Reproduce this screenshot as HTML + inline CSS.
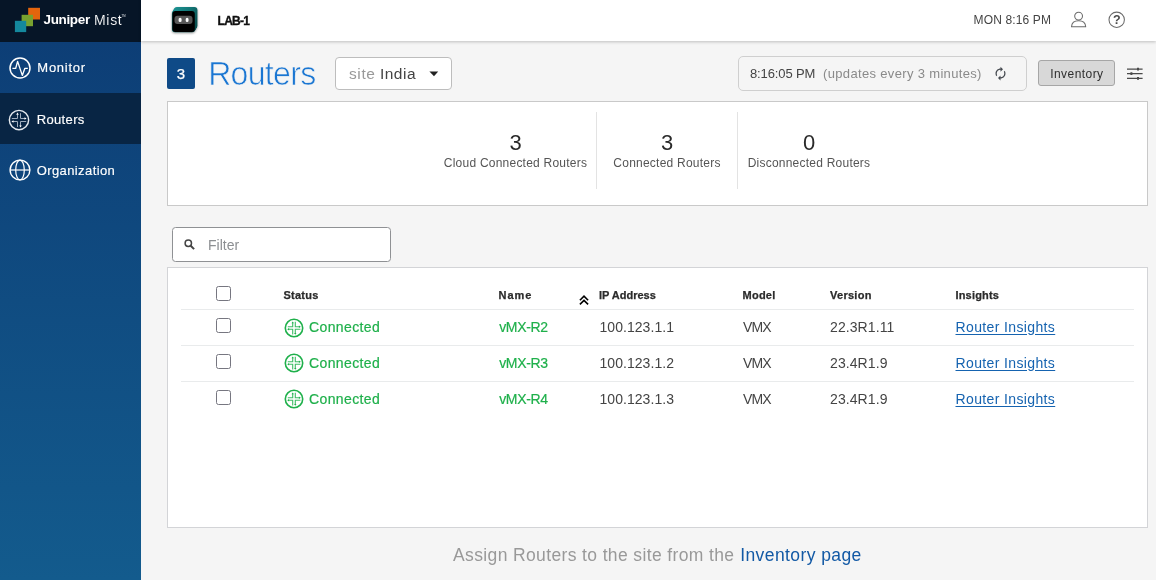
<!DOCTYPE html>
<html lang="en">
<head>
<meta charset="utf-8">
<title>Routers - Juniper Mist</title>
<style>
*{box-sizing:border-box;margin:0;padding:0}
html,body{width:1156px;height:580px;overflow:hidden}
body{position:relative;background:#f5f5f5;font-family:"Liberation Sans",sans-serif;color:#444;font-size:14px}
.abs{position:absolute;white-space:nowrap;line-height:1}
/* sidebar */
#side{position:absolute;left:0;top:0;width:141px;height:580px;background:linear-gradient(#0d3e76 0,#0d3e76 42px,#135b8d 580px)}
#logo{position:absolute;left:0;top:0;width:141px;height:42px;background:#061527}
.nav{position:absolute;left:0;width:141px;height:51px}
.nav.sel{background:#082544}
.nav span{position:absolute;-webkit-text-stroke:.15px #fff;color:#fff;font-size:13px;line-height:16px;letter-spacing:.75px;white-space:nowrap}
.nav svg{position:absolute}
/* header */
#hdr{position:absolute;left:141px;top:0;width:1015px;height:41px;background:#fff;box-shadow:0 1px 3px rgba(0,0,0,.22)}
/* panels */
.panel{position:absolute;background:#fff;border:1px solid #c9c9c9}
.hline{position:absolute;height:1px;background:#e9ebec;left:181px;width:953px}
.th{font-weight:bold;font-size:11px;color:#2b2b2b;-webkit-text-stroke:.25px #2b2b2b}
.td{font-size:14px;color:#444}
.g{color:#1fb04b;-webkit-text-stroke:.2px #1fb04b}
.lnk{color:#1563b0;text-decoration:underline;text-underline-offset:2px}
.cb{position:absolute;left:216px;width:15px;height:15px;border:1px solid #767680;border-radius:2.500px;background:#fff}
</style>
</head>
<body>
<div id="root" style="position:absolute;left:0;top:0;width:1156px;height:580px;will-change:transform">

<!-- ================= SIDEBAR ================= -->
<div id="side">
  <div id="logo">
    <svg class="abs" style="left:0;top:0" width="141" height="42" viewBox="0 0 141 42">
      <rect x="28.2" y="7.8" width="11.8" height="11.7" fill="#e4650d"/>
      <rect x="21.6" y="14.8" width="11.4" height="11.4" fill="#78a22f"/>
      <rect x="14.9" y="20.8" width="11.3" height="11.3" fill="#14889d"/>
    </svg>
    <span class="abs" id="lg1" style="left:43.5px;top:13.200px;font-size:13.5px;font-weight:bold;color:#fff;letter-spacing:-.35px">Juniper</span>
    <span class="abs" id="lg2" style="left:94px;top:12.800px;font-size:14px;color:#fff;letter-spacing:.7px;-webkit-text-stroke:.12px #061527">Mist</span>
    <span class="abs" id="lg3" style="left:121.600px;top:15.300px;font-size:2.800px;color:#dfe3e8">TM</span>
  </div>
  <div class="nav" style="top:42px">
    <svg style="left:8.900px;top:14.900px" width="22" height="22" viewBox="0 0 22 22" fill="none" stroke="#fff" stroke-width="1.500" stroke-linejoin="round">
      <circle cx="11" cy="11" r="10"/>
      <path d="M3.400 11.400h3.300l1.900-7 4.700 14 2.500-7h3" stroke-width="1.350"/>
    </svg>
    <span id="n1" style="left:37.300px;top:18px;letter-spacing:.75px">Monitor</span>
  </div>
  <div class="nav sel" style="top:93px"></div>
  <div class="nav" style="top:93px">
    <svg style="left:8.300px;top:15.500px" width="22" height="22" viewBox="0 0 22 22" fill="none" stroke="#e4e9ee" stroke-width="1.450">
      <circle cx="11" cy="11" r="9.650"/>
      <g stroke="#9fadbd" stroke-width="1">
        <path d="M3.800 9.500H9.500V5.200M12.500 4.200V9.500H17.200M5 12.500H9.500V18M18.200 12.500H12.500V17"/>
      </g>
      <g fill="#fff" stroke="none">
        <path d="M9.500 3.600l1.300 2.100H8.200zM18.600 9.500l-2.100 1.300V8.200zM3.400 12.500l2.100-1.300v2.600zM12.500 18.600l-1.300-2.100h2.600z"/>
      </g>
    </svg>
    <span id="n2" style="left:36.700px;top:19.400px;letter-spacing:.35px">Routers</span>
  </div>
  <div class="nav" style="top:144px">
    <svg style="left:8.700px;top:14.900px" width="22" height="22" viewBox="0 0 22 22" fill="none" stroke="#fff" stroke-width="1.400">
      <circle cx="11" cy="11" r="9.900"/>
      <path d="M1.200 11h19.600" stroke-width="1.200"/>
      <ellipse cx="11" cy="11" rx="4.300" ry="9.900" stroke-width="1.200"/>
    </svg>
    <span id="n3" style="left:36.700px;top:18.600px;letter-spacing:.4px">Organization</span>
  </div>
</div>

<!-- ================= HEADER ================= -->
<div id="hdr"></div>
<svg class="abs" style="left:171px;top:6px;filter:drop-shadow(0 1px 1.200px rgba(0,0,0,.4))" width="28" height="28" viewBox="0 0 28 28">
  <defs><linearGradient id="tg" x1="0" y1="0" x2="1" y2="0.600"><stop offset="0" stop-color="#1d9494"/><stop offset="0.550" stop-color="#127676"/><stop offset="1" stop-color="#0a5252"/></linearGradient></defs>
  <g fill="url(#tg)"><rect x="0.90" y="4.70" width="23.3" height="21.6" rx="3.300"/><rect x="1.27" y="4.07" width="23.3" height="21.6" rx="3.300"/><rect x="1.63" y="3.43" width="23.3" height="21.6" rx="3.300"/><rect x="2.00" y="2.80" width="23.3" height="21.6" rx="3.300"/><rect x="2.37" y="2.17" width="23.3" height="21.6" rx="3.300"/><rect x="2.73" y="1.53" width="23.3" height="21.6" rx="3.300"/><rect x="3.10" y="0.90" width="23.3" height="21.6" rx="3.300"/></g>
  <rect x="1.300" y="5.100" width="22.500" height="20.800" rx="3" fill="#000"/>
  <rect x="3.500" y="9.800" width="18" height="8.200" rx="3" fill="#585858"/>
  <ellipse cx="9.100" cy="13.900" rx="1.600" ry="2.200" fill="#fff"/>
  <ellipse cx="16.100" cy="13.900" rx="1.500" ry="2.200" fill="#fff"/>
</svg>
<span class="abs" id="lab" style="left:217.500px;top:15.200px;font-size:12px;font-weight:bold;color:#111;letter-spacing:-.7px;-webkit-text-stroke:.35px #111">LAB-1</span>
<span class="abs" id="clock" style="left:973.500px;top:13.500px;font-size:12px;color:#444;letter-spacing:.15px">MON 8:16 PM</span>
<svg class="abs" style="left:1069px;top:10px" width="20" height="20" viewBox="0 0 20 20" fill="none" stroke="#6a6a6a" stroke-width="1.050">
  <circle cx="9.600" cy="6.100" r="3.900"/>
  <path d="M2.500 16.700c.3-3.700 3.300-5.900 7.100-5.900s6.800 2.200 7.100 5.900z" stroke-linejoin="round"/>
</svg>
<svg class="abs" style="left:1107px;top:10px" width="20" height="20" viewBox="0 0 20 20">
  <circle cx="9.700" cy="9.800" r="7.700" fill="none" stroke="#6a6a6a" stroke-width="1.050"/>
  <text x="9.800" y="13.900" text-anchor="middle" font-family="Liberation Sans, sans-serif" font-weight="bold" font-size="12.500" fill="#4a4a4a">?</text>
</svg>

<!-- ================= TITLE ROW ================= -->
<div class="abs" style="left:167px;top:58px;width:28px;height:31px;background:#0f4a87;border-radius:2px"></div>
<span class="abs" id="badge" style="left:176.800px;top:66px;font-size:15px;color:#fff;-webkit-text-stroke:.25px #fff">3</span>
<span class="abs" id="title" style="left:208.200px;top:57.800px;font-size:32px;color:#1a76d2;-webkit-text-stroke:.65px #f5f5f5;letter-spacing:-.68px;transform:scaleY(1.035);transform-origin:0 27px">Routers</span>

<div class="abs" style="left:335px;top:57px;width:117px;height:33px;background:#fff;border:1px solid #bdbdbd;border-radius:4px"></div>
<span class="abs" id="site1" style="left:349px;top:65.500px;font-size:15.500px;color:#999;letter-spacing:.6px">site</span>
<span class="abs" id="site2" style="left:379.900px;top:65.500px;font-size:15.500px;color:#444;letter-spacing:.5px">India</span>
<svg class="abs" style="left:429px;top:71px" width="10" height="6" viewBox="0 0 10 6"><path d="M.4.600h8.800L5 5.200z" fill="#222"/></svg>

<div class="abs" style="left:738px;top:56px;width:289px;height:35px;border:1px solid #cfcfcf;border-radius:5px;background:#f5f5f5"></div>
<span class="abs" id="t1" style="left:750px;top:66.500px;font-size:13px;color:#444;letter-spacing:-.12px">8:16:05 PM</span>
<span class="abs" id="t2" style="left:823px;top:66.500px;font-size:13px;color:#8a8a8a;letter-spacing:.34px">(updates every 3 minutes)</span>
<svg class="abs" style="left:993.300px;top:66px" width="15" height="15" viewBox="0 0 24 24"><path fill="#454a50" d="M12 6v3l4-4-4-4v3c-4.420 0-8 3.580-8 8 0 1.570.460 3.030 1.240 4.260L6.700 14.800c-.450-.830-.700-1.790-.700-2.800 0-3.310 2.690-6 6-6zm6.760 1.740L17.300 9.200c.440.840.700 1.790.700 2.800 0 3.310-2.690 6-6 6v-3l-4 4 4 4v-3c4.420 0 8-3.580 8-8 0-1.570-.460-3.030-1.240-4.260z"/></svg>

<div class="abs" style="left:1038px;top:60px;width:77px;height:26px;background:#d8d8d8;border:1px solid #a6a6a6;border-radius:3px"></div>
<span class="abs" id="inv" style="left:1050.200px;top:67.500px;font-size:12px;color:#2e2e2e;letter-spacing:.44px">Inventory</span>
<svg class="abs" style="left:1126px;top:66px" width="18" height="16" viewBox="0 0 18 16" stroke="#4a4a4a" stroke-width="1.200" fill="none">
  <path d="M1 3.100h15.600M1 7.600h15.600M1 12.400h15.600"/>
  <path d="M12 1.700v2.800M5.400 6.200v2.800M12 11v2.800" stroke-width="2"/>
</svg>

<!-- ================= STATS PANEL ================= -->
<div class="panel" style="left:167px;top:101px;width:981px;height:105px"></div>
<div class="abs" style="left:596px;top:112px;width:1px;height:77px;background:#e3e3e3"></div>
<div class="abs" style="left:737px;top:112px;width:1px;height:77px;background:#e3e3e3"></div>
<span class="abs num" id="s1n" style="left:435px;width:161px;text-align:center;top:131.900px;font-size:22px;color:#2a2a2a">3</span>
<span class="abs" id="s1l" style="left:435px;width:161px;text-align:center;top:156.800px;font-size:12px;color:#555;letter-spacing:.23px">Cloud Connected Routers</span>
<span class="abs num" id="s2n" style="left:597px;width:140px;text-align:center;top:131.900px;font-size:22px;color:#2a2a2a">3</span>
<span class="abs" id="s2l" style="left:597px;width:140px;text-align:center;top:156.800px;font-size:12px;color:#555;letter-spacing:.23px">Connected Routers</span>
<span class="abs num" id="s3n" style="left:738px;width:142px;text-align:center;top:131.900px;font-size:22px;color:#2a2a2a">0</span>
<span class="abs" id="s3l" style="left:738px;width:142px;text-align:center;top:156.800px;font-size:12px;color:#555;letter-spacing:.23px">Disconnected Routers</span>

<!-- ================= FILTER ================= -->
<div class="abs" style="left:172px;top:227px;width:219px;height:35px;background:#fff;border:1px solid #8f9194;border-radius:3.500px"></div>
<svg class="abs" style="left:183px;top:238px" width="14" height="14" viewBox="0 0 14 14" fill="none" stroke="#444" stroke-width="1.500">
  <circle cx="5.300" cy="5.300" r="3.200"/>
  <path d="M7.700 7.700l3.400 3.400" stroke-width="2"/>
</svg>
<span class="abs" id="filter" style="left:208px;top:237.700px;font-size:14px;color:#8c8f92">Filter</span>

<!-- ================= TABLE PANEL ================= -->
<div class="panel" style="left:167px;top:267px;width:981px;height:261px;border-color:#d3d4d7"></div>
<div class="cb" style="top:286px"></div>
<div class="cb" style="top:318px"></div>
<div class="cb" style="top:354px"></div>
<div class="cb" style="top:390px"></div>

<span class="abs th" id="h1" style="left:283.500px;top:290px;letter-spacing:.24px">Status</span>
<span class="abs th" id="h2" style="left:498.500px;top:290px;letter-spacing:.95px">Name</span>
<svg class="abs" style="left:579px;top:295.400px" width="10" height="11" viewBox="0 0 10 11" fill="none" stroke="#000" stroke-width="1.600"><path d="M.900 5.200l4.100-4 4.100 4M.900 9.400l4.100-4 4.100 4"/></svg>
<span class="abs th" id="h3" style="left:599px;top:290px">IP Address</span>
<span class="abs th" id="h4" style="left:742.500px;top:290px;letter-spacing:.25px">Model</span>
<span class="abs th" id="h5" style="left:830px;top:290px;letter-spacing:.27px">Version</span>
<span class="abs th" id="h6" style="left:955.500px;top:290px;letter-spacing:.17px">Insights</span>

<div class="hline" style="top:309px"></div>
<div class="hline" style="top:345px"></div>
<div class="hline" style="top:381px"></div>

<!-- rows -->


<svg class="abs" style="left:283.600px;top:318.100px" width="20" height="20" viewBox="0 0 20 20"><g fill="none" stroke="#1fb04b">
    <circle cx="10" cy="10" r="8.700" stroke-width="1.600"/>
    <path d="M3.800 8.800H8.700V4.600M11.300 3.800V8.800H15.600M4.600 11.200H8.700V16.400M16.400 11.200H11.300V15.600" stroke-width="1.100" stroke="#3fbd66"/>
    <path d="M8.700 3.400l1.200 1.900H7.500zM16.800 8.800l-1.900 1.200V7.600zM3.200 11.200l1.900-1.200v2.400zM11.300 16.800l-1.200-1.900h2.400z" fill="#1fb04b" stroke="none"/>
  </g></svg>
<span class="abs td g" id="r1a" style="left:309px;top:319.500px;letter-spacing:.39px">Connected</span>
<span class="abs td g" id="r1b" style="left:499.2px;top:319.500px;letter-spacing:-.34px">vMX-R2</span>
<span class="abs td" id="r1c" style="left:599.500px;top:319.500px;letter-spacing:.05px">100.123.1.1</span>
<span class="abs td" id="r1d" style="left:743.1px;top:319.500px;letter-spacing:-.9px">VMX</span>
<span class="abs td" id="r1e" style="left:830px;top:319.500px;letter-spacing:.09px">22.3R1.11</span>
<span class="abs td lnk" id="r1f" style="left:955.500px;top:319.500px;letter-spacing:.37px">Router Insights</span>

<svg class="abs" style="left:283.600px;top:353.400px" width="20" height="20" viewBox="0 0 20 20"><g fill="none" stroke="#1fb04b">
    <circle cx="10" cy="10" r="8.700" stroke-width="1.600"/>
    <path d="M3.800 8.800H8.700V4.600M11.300 3.800V8.800H15.600M4.600 11.200H8.700V16.400M16.400 11.200H11.300V15.600" stroke-width="1.100" stroke="#3fbd66"/>
    <path d="M8.700 3.400l1.200 1.900H7.500zM16.800 8.800l-1.900 1.200V7.600zM3.200 11.200l1.900-1.200v2.400zM11.300 16.800l-1.200-1.900h2.400z" fill="#1fb04b" stroke="none"/>
  </g></svg>
<span class="abs td g" id="r2a" style="left:309px;top:355.500px;letter-spacing:.39px">Connected</span>
<span class="abs td g" id="r2b" style="left:499.2px;top:355.500px;letter-spacing:-.34px">vMX-R3</span>
<span class="abs td" id="r2c" style="left:599.500px;top:355.500px;letter-spacing:.05px">100.123.1.2</span>
<span class="abs td" id="r2d" style="left:743.1px;top:355.500px;letter-spacing:-.9px">VMX</span>
<span class="abs td" id="r2e" style="left:830px;top:355.500px;letter-spacing:.09px">23.4R1.9</span>
<span class="abs td lnk" id="r2f" style="left:955.500px;top:355.500px;letter-spacing:.37px">Router Insights</span>

<svg class="abs" style="left:283.600px;top:389.400px" width="20" height="20" viewBox="0 0 20 20"><g fill="none" stroke="#1fb04b">
    <circle cx="10" cy="10" r="8.700" stroke-width="1.600"/>
    <path d="M3.800 8.800H8.700V4.600M11.300 3.800V8.800H15.600M4.600 11.200H8.700V16.400M16.400 11.200H11.300V15.600" stroke-width="1.100" stroke="#3fbd66"/>
    <path d="M8.700 3.400l1.200 1.900H7.500zM16.800 8.800l-1.900 1.200V7.600zM3.200 11.200l1.900-1.200v2.400zM11.300 16.800l-1.200-1.900h2.400z" fill="#1fb04b" stroke="none"/>
  </g></svg>
<span class="abs td g" id="r3a" style="left:309px;top:391.500px;letter-spacing:.39px">Connected</span>
<span class="abs td g" id="r3b" style="left:499.2px;top:391.500px;letter-spacing:-.34px">vMX-R4</span>
<span class="abs td" id="r3c" style="left:599.500px;top:391.500px;letter-spacing:.05px">100.123.1.3</span>
<span class="abs td" id="r3d" style="left:743.1px;top:391.500px;letter-spacing:-.9px">VMX</span>
<span class="abs td" id="r3e" style="left:830px;top:391.500px;letter-spacing:.09px">23.4R1.9</span>
<span class="abs td lnk" id="r3f" style="left:955.500px;top:391.500px;letter-spacing:.37px">Router Insights</span>

<!-- ================= FOOTER ================= -->
<span class="abs" id="f1" style="left:453px;top:546.500px;font-size:17.500px;color:#999;letter-spacing:.37px">Assign Routers to the site from the</span>
<span class="abs" id="f2" style="left:740.200px;top:546.500px;font-size:17.500px;color:#1259a5;letter-spacing:.41px">Inventory page</span>

</div>
</body>
</html>
